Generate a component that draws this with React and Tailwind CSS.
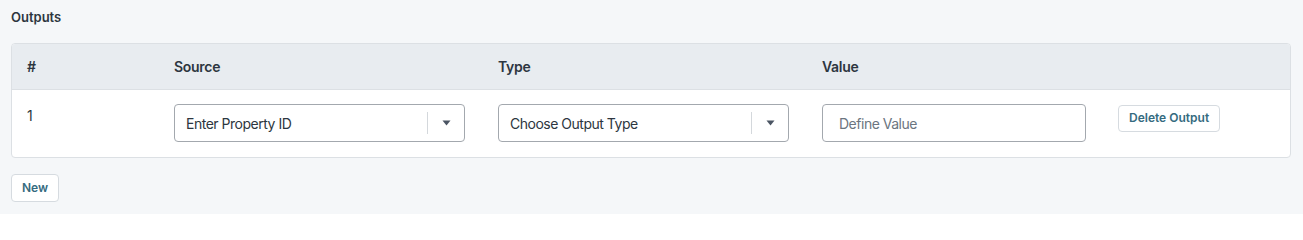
import React from "react";

function Caret() {
  return (
    <svg width="9" height="6" viewBox="0 0 9 6" className="block">
      <path d="M0.5 0.5 L8.5 0.5 L4.5 5.5 Z" fill="#4b5563" />
    </svg>
  );
}

function Select({ label }) {
  return (
    <div className="flex h-[38px] w-[291px] items-center rounded-[4px] border border-[#a3a8ae] bg-white">
      <span className="flex-1 pl-[11px] text-[14px] tracking-[-0.035em] text-[#2d3640]">{label}</span>
      <span className="h-[22px] w-px bg-[#d4d8dc]" />
      <span className="flex w-[36px] justify-center">
        <Caret />
      </span>
    </div>
  );
}

export default function App() {
  return (
    <div
      className="min-h-[214px] w-[1303px] bg-[#f5f7f9] px-[11px] pt-[9px]"
      style={{ fontFamily: "Inter, 'Liberation Sans', sans-serif" }}
    >
      <div className="text-[13px] font-semibold leading-[16px] text-[#2d3640]">Outputs</div>
      <div className="mt-[18px] w-[1280px] overflow-hidden rounded-[4px] border border-[#dce0e4] bg-white">
        <div className="grid h-[46px] grid-cols-[147px_324px_324px_296px_1fr] items-center border-b border-[#dce0e4] bg-[#e8ecf0] pl-[15px] text-[14px] font-semibold tracking-[-0.02em] text-[#2d3640]">
          <div>#</div>
          <div>Source</div>
          <div>Type</div>
          <div>Value</div>
          <div></div>
        </div>
        <div className="grid h-[67px] grid-cols-[147px_324px_324px_296px_1fr] items-start pl-[15px] pt-[14px]">
          <div className="pt-[1px] text-[14px] text-[#2d3640]">1</div>
          <div>
            <Select label="Enter Property ID" />
          </div>
          <div>
            <Select label="Choose Output Type" />
          </div>
          <div>
            <div className="flex h-[38px] w-[264px] items-center rounded-[4px] border border-[#a3a8ae] bg-white pl-[16px] text-[14px] tracking-[-0.035em] text-[#6b7580]">
              Define Value
            </div>
          </div>
          <div>
            <button className="h-[27px] rounded-[4px] border border-[#d6dbe0] bg-white px-[10px] text-[12px] font-semibold text-[#356b80]">
              Delete Output
            </button>
          </div>
        </div>
      </div>
      <button className="mt-[16px] h-[28px] rounded-[4px] border border-[#d6dbe0] bg-white px-[10px] text-[12px] font-semibold text-[#356b80]">
        New
      </button>
    </div>
  );
}
